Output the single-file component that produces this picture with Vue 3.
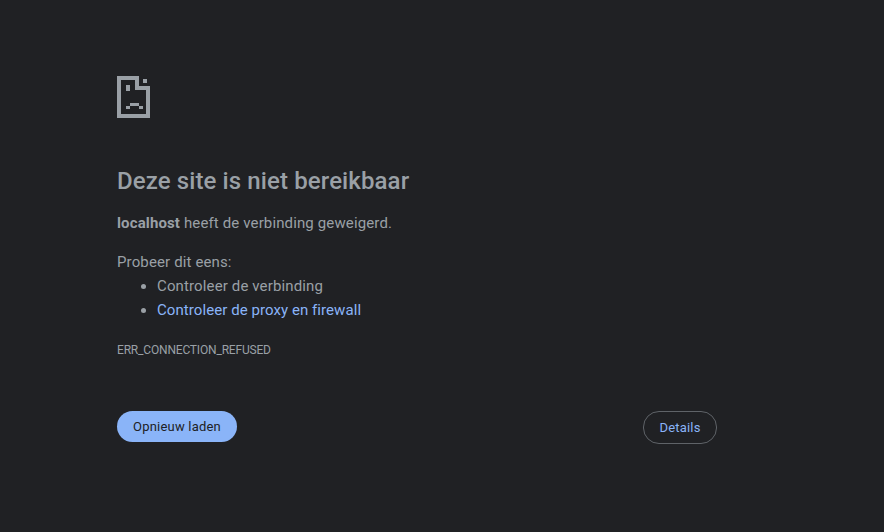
<template>
  <div class="page">
    <div class="wrapper">
      <svg class="icon" width="33" height="42" viewBox="0 0 33 42" shape-rendering="crispEdges">
        <path
          fill="#9aa0a6"
          d="M0 0H22V14H18V4H4V38H29V14H22V10H33V42H0Z M26 3H30V7H26Z M9 9H13V15H9Z M13 27H22V30H13Z M9 30H13V33H9Z M22 30H26V33H22Z"
        />
      </svg>
      <h1 class="title">Deze site is niet bereikbaar</h1>
      <p class="summary"><strong>localhost</strong> heeft de verbinding geweigerd.</p>
      <div class="suggestions">
        <p>Probeer dit eens:</p>
        <ul>
          <li>Controleer de verbinding</li>
          <li><a href="#">Controleer de proxy en firewall</a></li>
        </ul>
      </div>
      <div class="code">ERR_CONNECTION_REFUSED</div>
      <div class="buttons">
        <button class="reload">Opnieuw laden</button>
        <button class="details">Details</button>
      </div>
    </div>
  </div>
</template>

<script setup>
</script>

<style>
html,
body {
  margin: 0;
  background: #202124;
}
</style>

<style scoped>
.page {
  height: 532px;
  overflow: hidden;
  background: #202124;
  color: #9aa0a6;
  font-family: Roboto, "Noto Sans", sans-serif;
  font-size: 15px;
  line-height: 24px;
  letter-spacing: 0.13px;
}
.wrapper {
  display: flex;
  flex-direction: column;
  width: 600px;
  margin-left: 117px;
  padding-top: 76px;
}
.icon {
  display: block;
}
.title {
  margin: 47px 0 0;
  font-size: 24px;
  line-height: 32px;
  font-weight: 500;
  letter-spacing: 0.11px;
  color: #9aa0a6;
}
.summary {
  margin: 14px 0 0;
}
.summary strong {
  font-weight: 700;
}
.suggestions {
  margin-top: 15px;
}
.suggestions p {
  margin: 0;
}
.suggestions ul {
  margin: 0;
  padding-left: 40px;
}
a {
  color: #8ab4f8;
  text-decoration: none;
  letter-spacing: 0.07px;
}
.code {
  margin-top: 16px;
  font-size: 12px;
  line-height: 24px;
  letter-spacing: -0.18px;
}
.buttons {
  display: flex;
  justify-content: space-between;
  align-items: flex-start;
  margin-top: 49px;
}
button {
  font-family: inherit;
  font-size: 13px;
  font-weight: 400;
  letter-spacing: 0.2px;
  border-radius: 16px;
  cursor: pointer;
}
.reload {
  width: 120px;
  height: 31px;
  border: none;
  background: #8ab4f8;
  color: #202124;
}
.details {
  width: 74px;
  height: 33px;
  border: 1px solid #5f6368;
  background: transparent;
  color: #8ab4f8;
}
</style>
